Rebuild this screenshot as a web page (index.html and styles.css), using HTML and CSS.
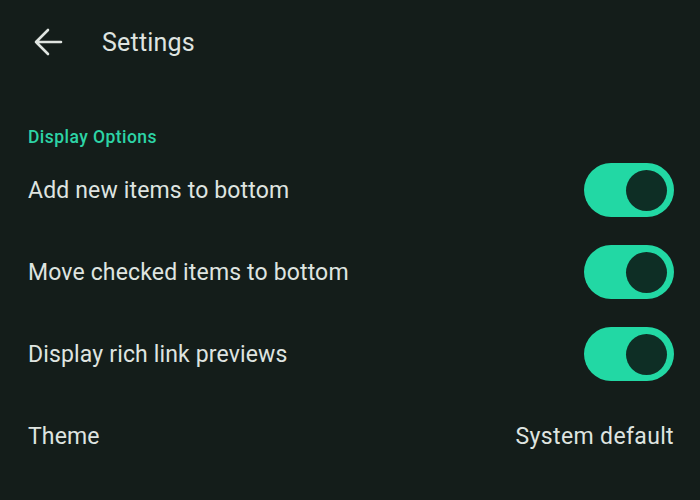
FILE: index.html
```html
<!DOCTYPE html>
<html lang="en">
<head>
    <meta charset="UTF-8">
    <meta name="viewport" content="width=device-width, initial-scale=1.0">
    <title>Settings</title>
    <link rel="stylesheet" href="styles.css">
</head>
<body>

<header class="top-bar">
    <button class="back-btn" aria-label="Back">
        <svg width="30" height="30" viewBox="0 0 30 30">
            <path d="M28 15H3M15 3L3 15l12 12" fill="none" stroke="#dfe4e0" stroke-width="2.6" stroke-linecap="round" stroke-linejoin="round"/>
        </svg>
    </button>
    <h1>Settings</h1>
</header>

<section class="group">
    <h2 class="group-title">Display Options</h2>

    <div class="row">
        <span class="label">Add new items to bottom</span>
        <span class="switch on"><span class="knob"></span></span>
    </div>
    <div class="row">
        <span class="label">Move checked items to bottom</span>
        <span class="switch on"><span class="knob"></span></span>
    </div>
    <div class="row">
        <span class="label">Display rich link previews</span>
        <span class="switch on"><span class="knob"></span></span>
    </div>
    <div class="row">
        <span class="label">Theme</span>
        <span class="value">System default</span>
    </div>
</section>

</body>
</html>
```

FILE: styles.css
```css
body {
    margin: 0;
    padding: 0;
    background-color: #141d1a;
    color: #dfe4e0;
    font-family: Roboto, "Noto Sans", sans-serif;
    height: 500px;
    overflow: hidden;
}
.top-bar {
    display: flex;
    align-items: center;
    height: 84px;
    padding-left: 33px;
}
.back-btn {
    background: none;
    border: none;
    padding: 0;
    width: 30px;
    height: 30px;
    display: flex;
}
.top-bar h1 {
    margin: 0 0 0 39px;
    font-size: 25px;
    font-weight: 400;
    letter-spacing: 0.2px;
}
.group {
    padding: 0 26px 0 28px;
}
.group-title {
    margin: 41px 0 0;
    font-size: 17.5px;
    font-weight: 500;
    letter-spacing: 0.45px;
    color: #2dd4a6;
    line-height: 24px;
}
.row {
    display: flex;
    align-items: center;
    justify-content: space-between;
    height: 82px;
}
.group-title + .row {
    margin-top: 0;
}
.label, .value {
    font-size: 23px;
    letter-spacing: 0.15px;
}
.value {
    letter-spacing: 0.35px;
}
.switch {
    display: flex;
    align-items: center;
    justify-content: flex-end;
    width: 90px;
    height: 54px;
    border-radius: 27px;
    background-color: #22d8a4;
    box-sizing: border-box;
    padding-right: 7px;
}
.knob {
    width: 41px;
    height: 41px;
    border-radius: 50%;
    background-color: #0e2e25;
}
```
